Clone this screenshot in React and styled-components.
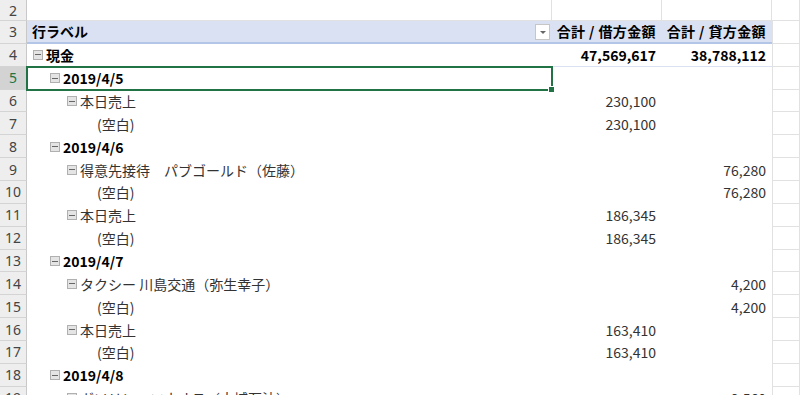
import React from 'react';
import styled, { createGlobalStyle } from 'styled-components';

const COLORS = {
  green: '#217346',
  headBg: '#D9E1F2',
  headLine: '#B4C6E7',
  grid: '#E1E1E1',
  rowHead: '#EEEEEE',
  rowHeadSel: '#D3D3D3',
  text: '#333333',
};

const GlobalStyle = createGlobalStyle`
  html, body {
    margin: 0;
    padding: 0;
    background: #fff;
    overflow: hidden;
  }
  body {
    font-family: "Noto Sans CJK JP", "Noto Sans", sans-serif;
  }
`;

const Sheet = styled.div`
  width: 800px;
  height: 395px;
  overflow: hidden;
  display: flex;
  flex-direction: column;
`;

const Row = styled.div`
  display: flex;
  flex: 0 0 auto;
  height: ${(p) => p.$h}px;
  box-sizing: border-box;
`;

const RowHead = styled.div`
  flex: 0 0 27px;
  box-sizing: border-box;
  display: flex;
  align-items: center;
  justify-content: center;
  background: ${(p) => (p.$sel ? COLORS.rowHeadSel : COLORS.rowHead)};
  color: ${(p) => (p.$sel ? COLORS.green : '#444')};
  border-right: 1px solid #C8C8C8;
  border-bottom: 1px solid #D4D4D4;
  font-family: "Noto Sans", "Liberation Sans", sans-serif;
  font-size: 14px;
`;

const Cell = styled.div`
  flex: 0 0 ${(p) => p.$w}px;
  box-sizing: border-box;
  position: relative;
  display: flex;
  align-items: center;
  justify-content: ${(p) => (p.$right ? 'flex-end' : 'flex-start')};
  padding: 0 ${(p) => (p.$right ? '6px' : '0')} 0 ${(p) => p.$pad || 0}px;
  font-size: 14px;
  font-weight: ${(p) => (p.$bold ? 700 : 400)};
  letter-spacing: ${(p) => (p.$head && p.$right ? '0.4px' : '0')};
  color: ${(p) => (p.$bold ? '#000' : COLORS.text)};
  white-space: nowrap;
  background: ${(p) => (p.$head ? COLORS.headBg : '#fff')};
  border-bottom: ${(p) =>
    p.$head
      ? `2px solid ${COLORS.headLine}`
      : p.$total
      ? `1px solid ${COLORS.headBg}`
      : p.$grid
      ? `1px solid ${COLORS.grid}`
      : 'none'};
  border-right: ${(p) => (p.$grid ? `1px solid ${COLORS.grid}` : 'none')};
  border-left: ${(p) => (p.$lead ? `1px solid ${COLORS.grid}` : 'none')};
  outline: ${(p) => (p.$sel ? `2px solid ${COLORS.green}` : 'none')};
  outline-offset: -1px;
  z-index: ${(p) => (p.$sel ? 1 : 0)};
`;

const FillHandle = styled.span`
  position: absolute;
  right: -3px;
  bottom: -3px;
  width: 5px;
  height: 5px;
  background: ${COLORS.green};
  border: 1px solid #fff;
`;

const Toggle = styled.span`
  flex: 0 0 auto;
  width: 10px;
  height: 10px;
  box-sizing: border-box;
  margin-right: 3px;
  display: inline-flex;
  align-items: center;
  justify-content: center;
  border: 1px solid #B0B0B0;
  background: #E4E4E4;
  visibility: ${(p) => (p.$hidden ? 'hidden' : 'visible')};
`;

const Minus = styled.span`
  width: 6px;
  height: 1px;
  background: #666;
`;

const FilterButton = styled.span`
  position: absolute;
  right: 2px;
  top: 3px;
  width: 15px;
  height: 16px;
  box-sizing: border-box;
  background: #fff;
  border: 1px solid #C6C6C6;
  display: flex;
  align-items: center;
  justify-content: center;
`;

const Caret = styled.span`
  width: 0;
  height: 0;
  border-left: 3px solid transparent;
  border-right: 3px solid transparent;
  border-top: 3px solid #666;
  margin-top: 1px;
`;

const COL_A = 525;
const COL_B = 110;
const COL_C = 110;
const COL_D = 28;

const rows = [
  { n: 4, level: 0, label: '現金', bold: true, b: '47,569,617', c: '38,788,112', total: true },
  { n: 5, level: 1, label: '2019/4/5', bold: true, sel: true },
  { n: 6, level: 2, label: '本日売上', b: '230,100' },
  { n: 7, level: 3, label: '(空白)', leaf: true, b: '230,100' },
  { n: 8, level: 1, label: '2019/4/6', bold: true },
  { n: 9, level: 2, label: '得意先接待　パブゴールド（佐藤）', c: '76,280' },
  { n: 10, level: 3, label: '(空白)', leaf: true, c: '76,280' },
  { n: 11, level: 2, label: '本日売上', b: '186,345' },
  { n: 12, level: 3, label: '(空白)', leaf: true, b: '186,345' },
  { n: 13, level: 1, label: '2019/4/7', bold: true },
  { n: 14, level: 2, label: 'タクシー 川島交通（弥生幸子）', c: '4,200' },
  { n: 15, level: 3, label: '(空白)', leaf: true, c: '4,200' },
  { n: 16, level: 2, label: '本日売上', b: '163,410' },
  { n: 17, level: 3, label: '(空白)', leaf: true, b: '163,410' },
  { n: 18, level: 1, label: '2019/4/8', bold: true },
  { n: 19, level: 2, label: 'ガソリン　エネオス（大城石油）', c: '2,560' },
];

const ROW_H = 22.87;

const PivotRow = ({ r }) => (
  <Row $h={ROW_H}>
    <RowHead $sel={r.sel}>{r.n}</RowHead>
    <Cell $w={COL_A} $pad={6 + r.level * 17} $bold={r.bold} $sel={r.sel} $total={r.total}>
      <Toggle $hidden={r.leaf}>
        <Minus />
      </Toggle>
      {r.label}
      {r.sel && <FillHandle />}
    </Cell>
    <Cell $w={COL_B} $right $bold={r.bold} $total={r.total}>
      {r.b}
    </Cell>
    <Cell $w={COL_C} $right $bold={r.bold} $total={r.total}>
      {r.c}
    </Cell>
    <Cell $w={COL_D} $grid $lead />
  </Row>
);

export default function App() {
  return (
    <>
      <GlobalStyle />
      <Sheet>
        <Row $h={21}>
          <RowHead>2</RowHead>
          <Cell $w={COL_A} $grid />
          <Cell $w={COL_B} $grid />
          <Cell $w={COL_C} $grid />
          <Cell $w={COL_D} $grid />
        </Row>
        <Row $h={ROW_H}>
          <RowHead>3</RowHead>
          <Cell $w={COL_A} $head $bold $pad={5}>
            行ラベル
            <FilterButton>
              <Caret />
            </FilterButton>
          </Cell>
          <Cell $w={COL_B} $head $bold $right>
            合計 / 借方金額
          </Cell>
          <Cell $w={COL_C} $head $bold $right>
            合計 / 貸方金額
          </Cell>
          <Cell $w={COL_D} $grid $lead />
        </Row>
        {rows.map((r) => (
          <PivotRow key={r.n} r={r} />
        ))}
      </Sheet>
    </>
  );
}
